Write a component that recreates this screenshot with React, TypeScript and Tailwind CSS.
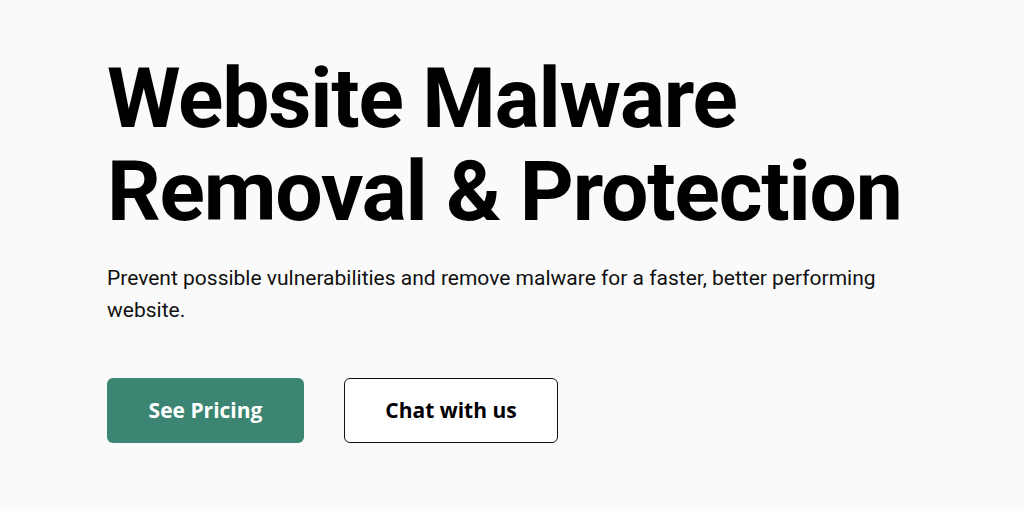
import React from "react";

export default function App() {
  return (
    <div className="min-h-[511px] w-full bg-[#fafafa] pl-[107px] pt-[52px]">
      <h1 className="text-[84px] leading-[93px] font-bold text-black tracking-[-1.2px] [font-family:Roboto,sans-serif]">
        Website Malware
        <br />
        Removal &amp; Protection
      </h1>
      <p className="mt-[24px] text-[21px] leading-[32px] text-[#111] [font-family:Roboto,sans-serif] max-w-[800px]">
        Prevent possible vulnerabilities and remove malware for a faster, better performing website.
      </p>
      <div className="mt-[52px] flex gap-[40px]">
        <button className="h-[65px] w-[197px] rounded-[6px] bg-[#3b8572] text-white text-[21px] font-bold [font-family:'Open_Sans',sans-serif]">
          See Pricing
        </button>
        <button className="h-[65px] w-[214px] rounded-[6px] border-[1.5px] border-[#111] bg-white text-black text-[21px] font-bold [font-family:'Open_Sans',sans-serif]">
          Chat with us
        </button>
      </div>
    </div>
  );
}
